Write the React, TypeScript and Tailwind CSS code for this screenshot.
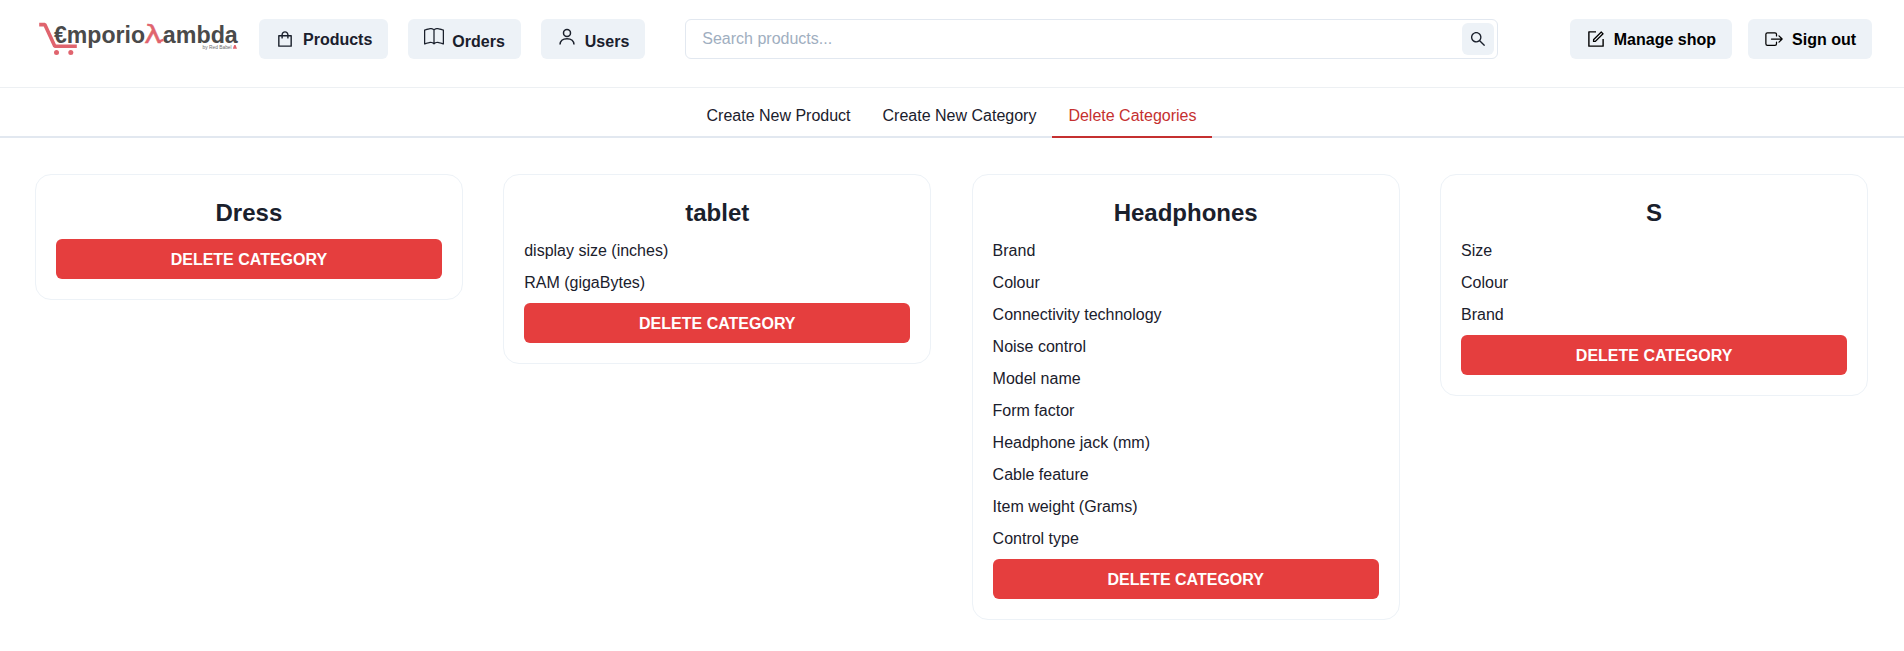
import type { ReactNode } from "react";
import { AiOutlineForm, AiOutlineSearch, AiOutlineShopping } from "react-icons/ai";
import { BsBook } from "react-icons/bs";
import { IoExitOutline } from "react-icons/io5";

type Category = { name: string; features: string[] };

const categories: Category[] = [
  { name: "Dress", features: [] },
  { name: "tablet", features: ["display size (inches)", "RAM (gigaBytes)"] },
  {
    name: "Headphones",
    features: [
      "Brand",
      "Colour",
      "Connectivity technology",
      "Noise control",
      "Model name",
      "Form factor",
      "Headphone jack (mm)",
      "Cable feature",
      "Item weight (Grams)",
      "Control type",
    ],
  },
  { name: "S", features: ["Size", "Colour", "Brand"] },
];

const tabs = ["Create New Product", "Create New Category", "Delete Categories"];
const activeTab = "Delete Categories";

function Logo() {
  return (
    <svg width="204" height="40" viewBox="0 0 204 40" className="block shrink-0" aria-label="Emporio Lambda">
      <path d="M4.2 5.6H9.8L19.8 27.2H41.8" fill="none" stroke="#e0646e" strokeWidth="3.6" strokeLinejoin="bevel" />
      <circle cx="21.5" cy="33.4" r="2.5" fill="#e0646e" />
      <circle cx="35.8" cy="33.4" r="2.5" fill="#e0646e" />
      <g fontFamily="Liberation Sans, Arial, sans-serif" fontWeight="700" fontSize="23.4" fill="#4a4a4a">
        <text x="19" y="23.8" textLength="91" lengthAdjust="spacingAndGlyphs">€mporio</text>
        <text x="127.8" y="23.8" textLength="75" lengthAdjust="spacingAndGlyphs">ambda</text>
      </g>
      <text
        x="109"
        y="23.8"
        fontFamily="DejaVu Sans Mono, monospace"
        fontSize="25"
        fill="#e0646e"
        stroke="#e0646e"
        strokeWidth="0.4"
        textLength="18"
        lengthAdjust="spacingAndGlyphs"
      >
        λ
      </text>
      <path d="M123.6 22.7L128.4 20.9" stroke="#e0646e" strokeWidth="2.4" />
      <text x="167.6" y="29.8" fontFamily="Liberation Sans, Arial, sans-serif" fontSize="4.9" fill="#6a6a6a" textLength="29" lengthAdjust="spacingAndGlyphs">
        by Red Babel
      </text>
      <path d="M197.8 29.8l1.4-3.8h1.4l1.4 3.8z" fill="#e0646e" />
    </svg>
  );
}

function UserIcon() {
  return (
    <svg width="20" height="20" viewBox="0 0 20 20" fill="none" stroke="currentColor" strokeWidth="1.5" className="-mt-1 block">
      <circle cx="10" cy="5.9" r="3.5" />
      <path d="M3 17.6c0-3.4 2.7-5.9 7-5.9s7 2.5 7 5.9" />
    </svg>
  );
}

function NavButton({ icon, children }: { icon: ReactNode; children: ReactNode }) {
  return (
    <button className="flex h-10 shrink-0 items-center gap-2 rounded-md bg-[#edf2f7] px-4 leading-5 font-semibold whitespace-nowrap">
      {icon}
      <span className="pt-0.5">{children}</span>
    </button>
  );
}

function CategoryCard({ name, features }: Category) {
  return (
    <section className="rounded-2xl border border-[#edf2f7] p-5">
      <h2 className="mb-2 text-center text-2xl leading-9 font-bold">{name}</h2>
      <ul>
        {features.map((feature) => (
          <li key={feature} className="mb-2 leading-6">
            {feature}
          </li>
        ))}
      </ul>
      <button className="flex h-10 w-full items-center justify-center rounded-md bg-[#e53e3e] px-4 pt-0.5 leading-5 font-semibold text-white">
        DELETE CATEGORY
      </button>
    </section>
  );
}

export default function App() {
  return (
    <div className="min-h-[651px] bg-white font-['Liberation_Sans',Arial,sans-serif] text-base text-[#1a202c]">
      <header className="flex h-22 items-start border-b border-[#edf0f3] pt-[19px] pr-8 pl-[35px]">
        <Logo />
        <nav className="ml-5 flex gap-5">
          <NavButton icon={<AiOutlineShopping size={20} />}>Products</NavButton>
          <NavButton icon={<BsBook size={20} className="-mt-1" />}>
            <span className="block pt-1">Orders</span>
          </NavButton>
          <NavButton icon={<UserIcon />}>
            <span className="block pt-1">Users</span>
          </NavButton>
        </nav>
        <div className="ml-10 flex h-10 w-[813px] items-center justify-between rounded-md border border-[#e2e8f0] pr-[3px] pl-4">
          <input className="min-w-0 grow outline-none placeholder:text-[#a0aec0]" placeholder="Search products..." />
          <button className="flex size-8 items-center justify-center rounded-md bg-[#edf2f7]" aria-label="Search">
            <AiOutlineSearch size={18} />
          </button>
        </div>
        <div className="ml-auto flex gap-4 text-black">
          <NavButton icon={<AiOutlineForm size={20} />}>Manage shop</NavButton>
          <NavButton icon={<IoExitOutline size={20} />}>Sign out</NavButton>
        </div>
      </header>

      <nav className="flex justify-center border-b-2 border-[#e2e8f0] pt-2 pr-px">
        {tabs.map((tab) => (
          <button
            key={tab}
            className={`-mb-0.5 border-b-2 px-4 py-2 leading-6 ${tab === activeTab ? "border-[#c53030] text-[#c53030]" : "border-transparent"}`}
          >
            {tab}
          </button>
        ))}
      </nav>

      <main className="grid grid-cols-4 items-start gap-x-[40.2px] pt-9 pr-[35.8px] pl-[34.8px]">
        {categories.map((category) => (
          <CategoryCard key={category.name} {...category} />
        ))}
      </main>
    </div>
  );
}
